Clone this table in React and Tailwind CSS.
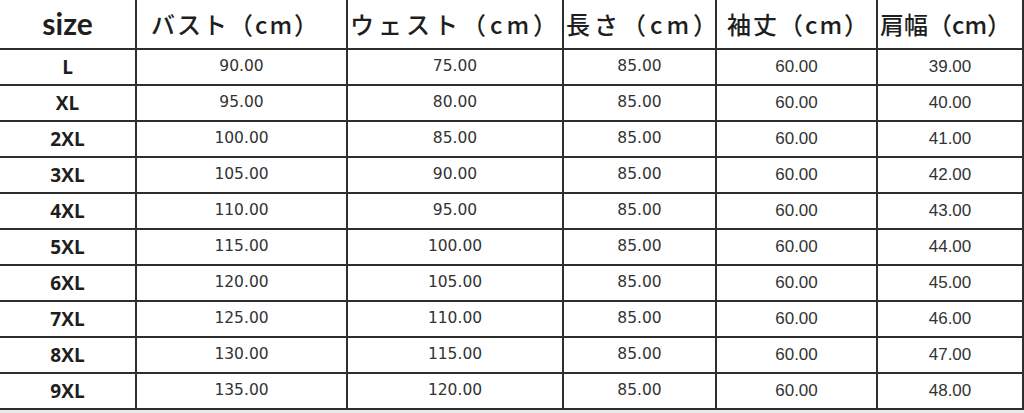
const HEADERS = [
  { label: 'バスト（cm）', cls: 'pl-[14px] tracking-[2px]' },
  { label: 'ウェスト（cm）', cls: 'pl-[2px] tracking-[4px]' },
  { label: '長さ（cm）', cls: 'pl-[2px] tracking-[4px]' },
  { label: '袖丈（cm）', cls: 'pl-[10px] tracking-[2px]' },
  { label: '肩幅（cm）', cls: 'pl-[2px] tracking-[0px]' },
];

const ROWS = [
  ['L', '90.00', '75.00', '85.00', '60.00', '39.00'],
  ['XL', '95.00', '80.00', '85.00', '60.00', '40.00'],
  ['2XL', '100.00', '85.00', '85.00', '60.00', '41.00'],
  ['3XL', '105.00', '90.00', '85.00', '60.00', '42.00'],
  ['4XL', '110.00', '95.00', '85.00', '60.00', '43.00'],
  ['5XL', '115.00', '100.00', '85.00', '60.00', '44.00'],
  ['6XL', '120.00', '105.00', '85.00', '60.00', '45.00'],
  ['7XL', '125.00', '110.00', '85.00', '60.00', '46.00'],
  ['8XL', '130.00', '115.00', '85.00', '60.00', '47.00'],
  ['9XL', '135.00', '120.00', '85.00', '60.00', '48.00'],
];

const cell = 'border-b-2 border-r-2 border-[#2e2e2e] flex items-center';

export default function App() {
  return (
    <div className="w-[1024px] h-[413px] overflow-hidden bg-[#e9e9e9]">
      <div className="grid grid-cols-[137px_211px_216px_153px_161px_1fr] bg-white">
        {/* header */}
        <div className={`${cell} h-[50px] justify-center font-['Lato','Open_Sans',sans-serif] font-bold text-[30px] text-[#1e1e1e] pb-[2px]`}>
          size
        </div>
        {HEADERS.map((h, i) => (
          <div
            key={h.label}
            className={`${cell} h-[50px] ${h.cls} whitespace-nowrap font-['Noto_Sans_CJK_JP',sans-serif] font-medium text-[24px] text-[#1e1e1e] ${i === 4 ? 'border-r-0' : ''}`}
          >
            {h.label}
          </div>
        ))}

        {/* rows */}
        {ROWS.map(r => (
          <div key={r[0]} className="contents">
            <div className={`${cell} h-[36px] justify-center font-['Open_Sans','Lato',sans-serif] font-bold text-[19px] text-[#1e1e1e]`}>
              {r[0]}
            </div>
            {r.slice(1).map((v, i) => (
              <div
                key={i}
                className={`${cell} h-[36px] justify-center text-[#333] ${
                  i < 3
                    ? "font-['DejaVu_Sans',sans-serif] text-[15.5px]"
                    : "font-['Liberation_Sans',sans-serif] text-[17px]"
                } ${i === 4 ? 'border-r-0' : ''}`}
              >
                {v}
              </div>
            ))}
          </div>
        ))}
      </div>
    </div>
  );
}
